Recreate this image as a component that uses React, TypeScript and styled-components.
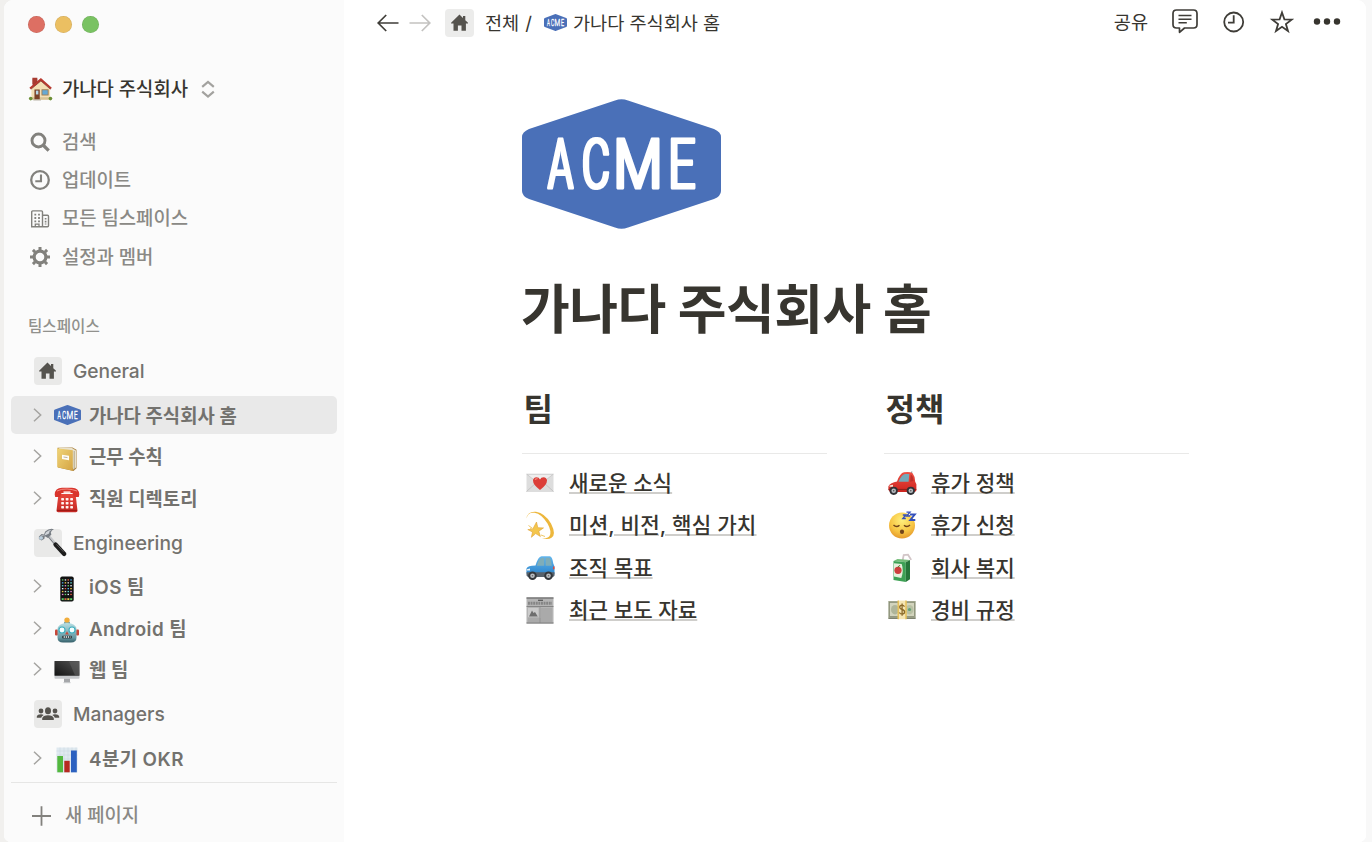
import React from "react";
import styled, { createGlobalStyle } from "styled-components";

const GlobalStyle = createGlobalStyle`
  *, *::before, *::after { box-sizing: border-box; }
  body {
    margin: 0;
    background: #f4f3f1;
    font-family: Inter, "Noto Sans CJK KR", sans-serif;
    color: #37352f;
    overflow: hidden;
  }
  svg { display: block; flex: none; overflow: visible; }
`;

/* ---------- layout ---------- */

const Desktop = styled.div`
  height: 842px;
  padding: 0 6px 0 4px;
  background: linear-gradient(90deg, #f1f0ee 0, #f1f0ee 50%, #f8f8f8 50%);
`;

const Window = styled.div`
  height: 842px;
  display: flex;
  border-radius: 9px 9px 7px 7px;
  overflow: hidden;
  background: #fff;
`;

const Sidebar = styled.aside`
  width: 340px;
  flex: none;
  display: flex;
  flex-direction: column;
  background: #fbfbfb;
`;

const TrafficLights = styled.div`
  display: flex;
  gap: 10px;
  padding: 16px 0 0 24px;
`;

const Light = styled.span<{ $color: string }>`
  width: 17px;
  height: 17px;
  border-radius: 50%;
  background: ${(p) => p.$color};
  box-shadow: inset 0 0 0 0.5px rgba(0, 0, 0, 0.12);
`;

const Workspace = styled.div`
  display: flex;
  align-items: center;
  height: 36px;
  margin-top: 38px;
  padding-left: 25px;
`;

const WorkspaceName = styled.span`
  margin: 0 13px 0 10px;
  padding-top: 2px;
  font-size: 18.8px;
  font-weight: 500;
  line-height: 28px;
  white-space: nowrap;
`;

const NavList = styled.nav`
  display: flex;
  flex-direction: column;
  margin-top: 16px;
`;

const NavItem = styled.a`
  display: flex;
  align-items: center;
  gap: 11px;
  height: 38.3px;
  padding-left: 25px;
  font-size: 18.8px;
  font-weight: 500;
  line-height: 28px;
  color: #8a8985;
  white-space: nowrap;
`;

const NavLabel = styled.span`
  padding-top: 1px;
`;

const SectionLabel = styled.h2`
  margin: 39px 0 10px 24px;
  font-size: 15.6px;
  font-weight: 500;
  line-height: 24px;
  color: #91918d;
`;

const Group = styled.section`
  margin-bottom: 4px;
`;

const GroupHeader = styled.div`
  display: flex;
  align-items: center;
  gap: 11px;
  height: 44px;
  padding-left: 30px;
  font-size: 19.2px;
  font-weight: 500;
  line-height: 28px;
  color: #73726e;
`;

const IconTile = styled.span`
  display: flex;
  align-items: center;
  justify-content: center;
  width: 28px;
  height: 28px;
  flex: none;
  border-radius: 4px;
  background: #e9e9e8;
`;

const TreeList = styled.div`
  display: flex;
  flex-direction: column;
  gap: 3px;
  padding: 2.6px 7px 0;
`;

const TreeRow = styled.a<{ $active?: boolean }>`
  display: flex;
  align-items: center;
  height: 38.3px;
  padding-left: 22px;
  border-radius: 5px;
  background: ${(p) => (p.$active ? "#e9e9e9" : "transparent")};
  font-size: 18.8px;
  font-weight: 600;
  line-height: 28px;
  color: #73726e;
  white-space: nowrap;
`;

const TreeIcon = styled.span<{ $drop: number }>`
  display: flex;
  justify-content: center;
  width: 28px;
  margin: 0 8px 0 11px;
  padding-top: ${(p) => p.$drop}px;
`;

const TreeLabel = styled.span<{ $tracking?: number }>`
  padding-top: 4px;
  letter-spacing: ${(p) => p.$tracking ?? 0}px;
`;

const NewPage = styled.div`
  display: flex;
  align-items: center;
  gap: 14px;
  height: 60px;
  margin: auto 7px 0;
  padding: 7px 0 0 21px;
  border-top: 1.5px solid #e6e6e5;
  font-size: 18.8px;
  font-weight: 500;
  line-height: 28px;
  color: #8a8985;
`;

const Main = styled.main`
  flex: 1;
  display: flex;
  flex-direction: column;
  background: #fff;
`;

const TopBar = styled.header`
  display: flex;
  align-items: center;
  height: 46px;
  padding: 0 25px 0 33px;
  font-size: 18.6px;
  line-height: 28px;
  white-space: nowrap;
`;

const Crumbs = styled.div`
  display: flex;
  align-items: center;
`;

const HomeTile = styled(IconTile)`
  margin: 0 11px 0 13px;
  width: 29px;
  background: #ececeb;
`;

const Slash = styled.span`
  margin: 0 12px 0 6px;
`;

const Actions = styled.div`
  display: flex;
  align-items: center;
  margin: -3px 0 0 auto;
`;

const Share = styled.span`
  margin-right: 24px;
`;

const Page = styled.article`
  padding: 53px 0 0 178px;
`;

const Title = styled.h1`
  margin: 41px 0 0 -1px;
  font-size: 53px;
  font-weight: 700;
  line-height: 80px;
  letter-spacing: -0.5px;
  white-space: nowrap;
`;

const Columns = styled.div`
  display: grid;
  grid-template-columns: 305px 305px;
  column-gap: 57px;
  margin-top: 36px;
`;

const ColumnTitle = styled.h2`
  margin: 0;
  padding: 0 0 19px 1.5px;
  border-bottom: 1.3px solid #e9e9e8;
  font-size: 32px;
  font-weight: 600;
  line-height: 48px;
`;

const LinkList = styled.div`
  padding: 7.3px 0 0 4px;
`;

const LinkRow = styled.div`
  display: flex;
  align-items: center;
  gap: 15px;
  height: 42.5px;
  font-size: 21.2px;
  font-weight: 500;
  line-height: 32px;
`;

const PageLink = styled.a<{ $tracking?: number }>`
  letter-spacing: ${(p) => p.$tracking ?? 0}px;
  text-decoration: underline;
  text-decoration-color: #cfcecb;
  text-decoration-thickness: 1.6px;
  text-underline-offset: 1.2px;
  white-space: nowrap;
`;

/* ---------- line icons ---------- */

const logoLetters = [
  { char: "A", x: 26.2, stretch: 0.57 },
  { char: "C", x: 60, stretch: 0.62 },
  { char: "M", x: 91.5, stretch: 0.82 },
  { char: "E", x: 146.5, stretch: 0.68 },
];

const HexLogo = ({ width }: { width: number }) => (
  <svg width={width} height={width > 100 ? (width * 130) / 199 : width * 0.74} viewBox="0 0 199 130" preserveAspectRatio="none">
    <defs>
      <filter id="embolden" x="-10%" y="-10%" width="120%" height="120%">
        <feMorphology operator="dilate" radius="1 0" />
      </filter>
    </defs>
    <path
      d="M93 1.6Q99.500 -1 106 1.600L192 30Q199 33 199 38V92Q199 97 192 100L106 128.400Q99.500 131 93 128.400L7 100Q0 97 0 92V38Q0 33 7 30Z"
      fill="#4a70b8"
    />
    <g
      fontFamily="Roboto, sans-serif"
      fontSize="69"
      fontWeight="300"
      fill="#fff"
      stroke="#fff"
      strokeWidth="2.8"
      strokeLinejoin="round"
      filter={width > 100 ? "url(#embolden)" : undefined}
    >
      {logoLetters.map((l) => (
        <text key={l.char} transform={`translate(${l.x} 89) scale(${l.stretch} 1)`}>
          {l.char}
        </text>
      ))}
    </g>
  </svg>
);

const HomeGlyph = () => (
  <svg width="18" height="18" viewBox="0 0 18 18" fill="#55534e">
    <path d="M8.500 .6 12 3.900V2h2.300v4.200L17 8.700v.8H14.900V16.700h-4.400v-5.200H6.900V16.700H2.500V9.500H.1V8.700Z" />
  </svg>
);

const SortArrows = () => (
  <svg width="14" height="18" viewBox="0 0 14 18" fill="none" stroke="#a3a29f" strokeWidth="2.200">
    <path d="M1.200 6.800 7 2l5.800 4.800M1.200 11.700 7 16.500l5.800-4.800" />
  </svg>
);

const SearchIcon = () => (
  <svg width="22" height="22" viewBox="0 0 22 22" fill="none" stroke="#82817d">
    <circle cx="9.500" cy="9.500" r="6.500" strokeWidth="2.900" />
    <path d="m14.300 14.300 5.400 5.300" strokeWidth="3.300" />
  </svg>
);

const UpdatesIcon = () => (
  <svg width="22" height="22" viewBox="0 0 22 22" fill="none" stroke="#82817d">
    <circle cx="11" cy="11" r="8.800" strokeWidth="2.300" />
    <path d="M12 5.600v6.600H6.300" strokeWidth="2.100" />
  </svg>
);

const BuildingIcon = () => (
  <svg width="22" height="22" viewBox="0 0 22 22" fill="none" stroke="#82817d" strokeWidth="1.400">
    <path d="M2.700 18.800V3.900q0-1 1-1h8.800q1 0 1 1v14.900ZM13.500 7.200h5q1 0 1 1v9.600q0 1-1 1h-5" />
    <path d="M6.300 5.800v8.500M10 5.800v8.500" strokeWidth="1.800" strokeDasharray="1.800 1.500" />
    <path d="M16.600 10v6.500" strokeWidth="1.700" strokeDasharray="1.600 1.200" />
    <path d="M6.300 18.500v-2.300h3.700v2.300" strokeWidth="1.300" />
  </svg>
);

const GearIcon = () => (
  <svg width="22" height="22" viewBox="0 0 22 22" fill="none" stroke="#82817d">
    <circle cx="11" cy="11" r="5.900" strokeWidth="3.200" />
    <g strokeWidth="3">
      {[0, 45, 90, 135, 180, 225, 270, 315].map((a) => (
        <path key={a} d="M11 4.200V1" transform={`rotate(${a} 11 11)`} />
      ))}
    </g>
  </svg>
);

const Chevron = () => (
  <svg width="9" height="14" viewBox="0 0 9 14" fill="none" stroke="#a5a4a1" strokeWidth="1.500">
    <path d="m1 .8 6.700 6.200L1 13.200" />
  </svg>
);

const PlusIcon = () => (
  <svg width="19" height="20" viewBox="0 0 19 20" fill="none" stroke="#82817d" strokeWidth="1.800">
    <path d="M9.500 .3v19.400M0 10h19" />
  </svg>
);

const PeopleIcon = () => (
  <svg width="24" height="14" viewBox="0 0 24 14" fill="#55534e">
    <circle cx="5" cy="4" r="2.400" />
    <circle cx="19" cy="4" r="2.400" />
    <ellipse cx="12" cy="3.700" rx="3" ry="3.500" />
    <path d="M6.200 13V11.200Q7 8.200 12 8.200t5.800 3V13ZM.8 10.700V9.500Q1.500 7.300 5 7.300q1.600 0 2.700.6Q5.600 9 5.200 10.700ZM23.200 10.700V9.500Q22.500 7.300 19 7.300q-1.600 0-2.700.6 2.100 1.100 2.500 2.800Z" />
  </svg>
);

const ArrowIcon = ({ forward }: { forward?: boolean }) => (
  <svg width="22" height="18" viewBox="0 0 22 18" fill="none" stroke={forward ? "#c3c2c0" : "#3f3d38"} strokeWidth="1.700">
    <path d={forward ? "M.5 9h20M12.800 1l8 8-8 8" : "M21.500 9h-20M9.200 1l-8 8 8 8"} />
  </svg>
);

const CommentIcon = () => (
  <svg width="26" height="25" viewBox="0 0 26 25" fill="none" stroke="#3f3d38" strokeWidth="1.700" strokeLinejoin="round">
    <path d="M4.500 1h17Q25 1 25 4.500v11q0 3.500-3.500 3.500H12.500L7.500 23.300V19h-3Q1 19 1 15.500v-11Q1 1 4.500 1Z" />
    <path d="M6.500 6.600h13M6.500 10.200h13M6.500 13.800h8.300" strokeWidth="1.500" />
  </svg>
);

const HistoryIcon = () => (
  <svg width="22" height="22" viewBox="0 0 22 22" fill="none" stroke="#3f3d38" strokeWidth="1.800">
    <circle cx="10.700" cy="11" r="9.500" />
    <path d="M10.700 4.300v7.400H5" />
  </svg>
);

const StarIcon = () => (
  <svg width="24" height="24" viewBox="0 0 24 24" fill="none" stroke="#3f3d38" strokeWidth="1.800" strokeLinejoin="miter">
    <path d="m12 2.500 2.400 6.900 7.300.2-5.800 4.400 2.100 7-6-4.200L6 21l2.100-7-5.800-4.400 7.300-.2Z" />
  </svg>
);

const DotsIcon = () => (
  <svg width="28" height="7" viewBox="0 0 28 7" fill="#37352f">
    <circle cx="4" cy="3.500" r="3.200" />
    <circle cx="14" cy="3.500" r="3.200" />
    <circle cx="24" cy="3.500" r="3.200" />
  </svg>
);

/* ---------- emoji illustrations ---------- */

const HouseEmoji = () => (
  <svg width="23" height="24" viewBox="0 0 24 24">
    <path d="M4 1.500h4.500v7H4Z" fill="#8c3a30" />
    <path d="M2.500 11.500 12.400 3 22 11.500V23H2.500Z" fill="#f3dfb5" />
    <path d="M2.500 20.500H22V23.300H2.500Z" fill="#d9c294" />
    <path d="M12.400 .6 23.800 10.600 22.600 12.300 12.400 3.600 1.800 12.300.4 10.600Z" fill="#b8392f" />
    <path d="m12.400 3.600 10 8.700M2 12.300l10.400-8.700" stroke="#7d2a22" strokeWidth=".7" />
    <path d="M3.500 .3h5.200v3L3.500 7.500Z" fill="#a83c32" />
    <rect x="5.700" y="12.500" width="5.500" height="10.500" fill="#7a4228" />
    <rect x="7.200" y="13.700" width="2.600" height="4" fill="#b8d7e6" />
    <rect x="13.500" y="12.800" width="6.500" height="5.500" fill="#66a9d4" stroke="#a47a4a" strokeWidth=".9" />
    <circle cx="1.800" cy="22" r="1.900" fill="#6c8f35" />
    <circle cx="22.400" cy="22" r="1.900" fill="#6c8f35" />
    <rect x="4.500" y="22.800" width="8" height="1.200" fill="#b9b3a8" />
  </svg>
);

const LedgerEmoji = () => (
  <svg width="22" height="26" viewBox="0 0 22 26">
    <defs>
      <linearGradient id="ledger" x1="0" y1="0" x2="1" y2="1">
        <stop offset="0" stopColor="#f0d478" />
        <stop offset="1" stopColor="#d4a443" />
      </linearGradient>
    </defs>
    <path d="m1.500 1.700 15-.2 4 2.300v18.500L17.500 25 2 21.500Z" fill="#a9803a" />
    <path d="m2.500 1.700 13.500.3 4 2.400v17l-2.500 2.200Z" fill="#e9e2cc" />
    <path d="M1.200 2.300 16.800 4.300V24.800L1.200 21.200Z" fill="url(#ledger)" />
    <path d="M18.200 5v18.500" stroke="#a3977a" strokeWidth=".8" />
    <path d="m6 8.700 7 1v4.600L6 13Z" fill="#fffdf5" />
    <path d="m7.500 11 4 .6" stroke="#a9a08d" strokeWidth=".8" />
  </svg>
);

const PhoneEmoji = () => (
  <svg width="26" height="26" viewBox="0 0 26 26">
    <defs>
      <linearGradient id="phone" x1="0" y1="0" x2="0" y2="1">
        <stop offset="0" stopColor="#e8463c" />
        <stop offset="1" stopColor="#c42a25" />
      </linearGradient>
    </defs>
    <path d="M4.500 7h17l2 16.500q.2 1.800-1.700 1.800H4.200q-1.900 0-1.700-1.800Z" fill="url(#phone)" />
    <path d="M.7 7.500Q1 1 8 .8h10q7 .2 7.300 6.700l-.5 2.600h-5l-1.300-4h-11l-1.300 4h-5Z" fill="#d9352d" />
    <path d="M3 4Q7.500 1.700 13 2t10 2" stroke="#f58a80" strokeWidth="1" fill="none" />
    <path d="M9.500 4.300h7v1.800h-7Z" fill="#f7d7d3" />
    {[11, 15, 19].map((y) =>
      [7.2, 11.700, 16.200].map((x) => (
        <rect key={`${x}-${y}`} x={x} y={y} width="2.800" height="2.400" rx=".6" fill="#fff3f0" />
      ))
    )}
    <path d="M3 23.400h20" stroke="#93140f" strokeWidth=".8" />
  </svg>
);

const HammerSvg = styled.svg`
  position: relative;
  left: 4.5px;
`;

const HammerEmoji = () => (
  <HammerSvg width="30" height="29" viewBox="0 0 30 29">
    <path d="m10.500 8 8.500 10" stroke="#c5c7ca" strokeWidth="3" />
    <path d="m10.500 9 8 9.500" stroke="#777a7e" strokeWidth="1" />
    <path d="m17.500 16.500 8.700 9.500" stroke="#1d1d1d" strokeWidth="4.300" strokeLinecap="round" />
    <path d="m18.500 16.300 7 7.500" stroke="#666" strokeWidth=".8" />
    <path d="M.9 8.500 3.600 6 6 6.500 7.200 3.400Q11.500-.2 16 1.200q-2.700.8-3.200 3.200l.6 2.200L10 10 6.800 8.300 6.400 10.800 3.500 12.500.9 11Z" fill="#777d84" />
    <path d="M1.800 9 4 7.200l2 .8 2-3.800Q11 1.600 13.500 1.700 10.700 3.500 11 5.500L8.500 6.700" fill="#d0d4d9" />
    <ellipse cx="3" cy="10" rx="2" ry="1.800" fill="#bcd0df" />
  </HammerSvg>
);

const appColors = ["#5fd068", "#e8f3ff", "#e25f43", "#51a8e8", "#efc84a", "#d7d7d7", "#5fd3d0", "#e68ad6"];
const MobileEmoji = () => (
  <svg width="14" height="26" viewBox="0 0 14 26">
    <rect x=".3" y=".5" width="13.400" height="25" rx="1.800" fill="#111" />
    {[0, 1, 2, 3, 4, 5].map((r) =>
      [0, 1, 2, 3].map((c) => (
        <rect key={`${r}-${c}`} x={1.9 + c * 2.8} y={3.3 + r * 2.9} width="1.500" height="1.300" fill={appColors[(r * 3 + c) % 8]} />
      ))
    )}
    <rect x="1.300" y="22" width="11.400" height="2.400" fill="#23402a" />
    {[0, 1, 2, 3].map((c) => (
      <rect key={c} x={1.8 + c * 2.8} y="22.300" width="1.800" height="1.700" fill={appColors[(c * 2) % 6]} />
    ))}
  </svg>
);

const RobotEmoji = () => (
  <svg width="24" height="26" viewBox="0 0 24 26">
    <defs>
      <linearGradient id="robot" x1="0" y1="0" x2="0" y2="1">
        <stop offset="0" stopColor="#b6dfe4" />
        <stop offset=".75" stopColor="#6699a3" />
        <stop offset="1" stopColor="#365f69" />
      </linearGradient>
    </defs>
    <rect x="0" y="12.500" width="3" height="6" rx="1" fill="#c74738" />
    <rect x="21" y="12.500" width="3" height="6" rx="1" fill="#c74738" />
    <path d="M9 4.800h6V7H9Z" fill="#7ba8b0" />
    <ellipse cx="12" cy="3" rx="2.700" ry="2.600" fill="#f1ad3c" />
    <path d="M12 6q9 0 9.500 6.500v8Q21.500 25.500 16 25.500H8q-5.500 0-5.500-5v-8Q3 6 12 6Z" fill="url(#robot)" />
    <circle cx="7" cy="13" r="3" fill="#f4ffff" stroke="#3dafc0" strokeWidth="1.100" />
    <circle cx="17" cy="13" r="3" fill="#f4ffff" stroke="#3dafc0" strokeWidth="1.100" />
    <path d="m12 14.200 1.800 3.200h-3.600Z" fill="#c64a3a" />
    <rect x="7" y="18.800" width="10" height="2.600" rx="1" fill="#354346" />
    <path d="M8.700 20h6.700" stroke="#eee" strokeWidth="1.500" strokeDasharray="1.200 .9" />
  </svg>
);

const DesktopEmoji = () => (
  <svg width="26" height="24" viewBox="0 0 26 24">
    <defs>
      <linearGradient id="screen" x1="0" y1="1" x2="1" y2="0">
        <stop offset="0" stopColor="#131313" />
        <stop offset="1" stopColor="#545454" />
      </linearGradient>
    </defs>
    <rect x=".5" y="1" width="25" height="17.700" rx=".8" fill="#c7c9cc" />
    <rect x=".5" y="1" width="25" height="14.800" rx=".6" fill="url(#screen)" />
    <path d="M15 1.500h10v14h-4Z" fill="#646464" opacity=".5" />
    <path d="M10 18.700h6v3.700h-6Z" fill="#a5a7aa" />
    <path d="M9.500 22h7v1.200h-7Z" fill="#c8cacc" />
  </svg>
);

const ChartEmoji = () => (
  <svg width="22" height="26" viewBox="0 0 22 26">
    <rect x=".5" y=".5" width="21" height="25" fill="#dfe9f0" />
    <path d="M.5 4h21M.5 8h21M.5 12h21M4 .5v25M8 .5v25M12 .5v25M16 .5v25M20 .5v25" stroke="#c7d5df" strokeWidth=".5" />
    <rect x="1.300" y="9" width="5.700" height="16.300" fill="#53b83f" />
    <rect x="8.300" y="13.800" width="5.400" height="11.500" fill="#b62a20" />
    <rect x="15" y="3.500" width="5.800" height="21.800" fill="#2c61c0" />
  </svg>
);

const LoveLetterEmoji = () => (
  <svg width="28" height="28" viewBox="0 0 28 28">
    <rect x=".5" y="5" width="27" height="18" rx=".6" fill="#dddddd" />
    <path d="m.5 22.500 10-9M27.500 22.500l-10-9" stroke="#bcbcbc" strokeWidth=".8" />
    <path d="M.7 5.200 14 15.500 27.300 5.200Z" fill="#eeeeee" stroke="#c2c2c2" strokeWidth=".7" />
    <path d="M14 21Q7 16 7 11.600 7.200 8.300 10.500 8.200 13 8.200 14 10.500 15 8.200 17.500 8.200 20.800 8.300 21 11.600 21 16 14 21Z" fill="#dc3e38" />
    <path d="M9 10.700q1-1.300 2.600-.9" stroke="#f58e83" strokeWidth="1.100" fill="none" />
  </svg>
);

const DizzyEmoji = () => (
  <svg width="28" height="30" viewBox="0 0 28 30">
    <path d="M.5 8.500Q1.500 1 10 1.800 19 3.300 25 13.500 30.500 24.500 25.500 27.700 22.500 29.700 16 28.300q6 .2 7.600-2.300Q26 21.500 21.500 13.500 15.500 4 8.500 2.800 1.800 2 .5 8.500Z" fill="#edb73c" />
    <path d="m10.500 12 1.300 5.700 5.700.2-4.700 3.300 1.600 5.300-4.700-2.900-4.300 3.700L6.500 22 1.800 19.600l4.900-.4Z" fill="#f4c64c" stroke="#dfa134" strokeWidth=".6" strokeLinejoin="round" />
    <path d="m4 18 2.500 1.500M2.500 15.500l4.200 3M15 25l4 1.500" stroke="#f0c866" strokeWidth="1" />
  </svg>
);

const SuvEmoji = () => (
  <svg width="29" height="26" viewBox="0 0 29 26">
    <defs>
      <linearGradient id="suv" x1="0" y1="0" x2="0" y2="1">
        <stop offset="0" stopColor="#63b7ee" />
        <stop offset="1" stopColor="#277fc8" />
      </linearGradient>
    </defs>
    <path d="M9.500 10.500Q12 1.800 15.500 1.200h8.200q2.700.3 3.600 7.300l1.200 3v7.500L27 21.500H2L.5 18v-4.500q1-2.800 9-3Z" fill="url(#suv)" />
    <path d="M10.800 10.700Q13 3.500 16 2.800h2.200v7.900ZM19.600 2.800h3.700q1.800.8 2.500 7.900h-6.200Z" fill="#7fadb9" />
    <path d="M.5 17.300h28v3.500L27 22H2L.5 20.500Z" fill="#56616b" />
    <path d="M1 14.300l3-.8v2H1Z" fill="#eef6fa" />
    <rect x="27" y="11.500" width="1.500" height="2.800" fill="#e14839" />
    {[6.500, 22.500].map((x) => (
      <g key={x}>
        <circle cx={x} cy="20.800" r="4.300" fill="#33373b" />
        <circle cx={x} cy="20.800" r="2.300" fill="#b8bdc2" />
        <circle cx={x} cy="20.800" r=".8" fill="#666" />
      </g>
    ))}
  </svg>
);

const NewspaperEmoji = () => (
  <svg width="28" height="27" viewBox="0 0 28 27">
    <rect x=".5" y=".5" width="27" height="26" fill="#b4b4b4" />
    <path d="M.5 1h27" stroke="#6f6f6f" strokeWidth="1.300" />
    <path d="M2 6.300h24" stroke="#858585" strokeWidth="3" strokeDasharray="1.900 .7" />
    <path d="M12 3.300h5" stroke="#555" strokeWidth="1.200" />
    <path d="M.5 9.500h27" stroke="#797979" strokeWidth=".8" />
    <rect x="2" y="11" width="10.500" height="9" fill="#cbcbcb" />
    <path d="m3 19.500 3-6 1.500 2.500 1.500-1 2.800 4.500Z" fill="#6e6e6e" />
    <path d="M15 12h11M15 14h11M15 16h11M15 18h11M15 20h11M2 22h24M2 24h24" stroke="#999" strokeWidth=".7" />
    <path d="M14 10v16" stroke="#8a8a8a" strokeWidth=".7" />
    <path d="M.5 26h27" stroke="#777" strokeWidth="1" />
  </svg>
);

const CarEmoji = () => (
  <svg width="29" height="26" viewBox="0 0 29 26">
    <defs>
      <linearGradient id="car" x1="0" y1="0" x2="0" y2="1">
        <stop offset="0" stopColor="#ef5044" />
        <stop offset="1" stopColor="#cd241f" />
      </linearGradient>
    </defs>
    <path d="m23.500 4 .3-2.500" stroke="#555" strokeWidth=".7" />
    <path d="M9 11.500Q12 3 16 2.300q6-.8 8.600.9 2.500 3 2.600 8.500l1.200 2.500v6.300L27 22H2L.4 19.800v-3.600Q2.500 12.500 9 11.500Z" fill="url(#car)" />
    <path d="M10.500 11.700Q13.500 4.700 17 4h4.300l-.7 7.700Z" fill="#74a9b9" />
    <path d="M22.700 4.500q2.500 1.400 2.800 6.500l-3.300.7Z" fill="#be302a" />
    <path d="M.6 19.500h27.700" stroke="#94201b" strokeWidth="1.200" />
    <path d="m1.500 15.500 3.500-.8v2H1.500Z" fill="#fbe5d9" />
    {[5.700, 22.800].map((x) => (
      <g key={x}>
        <circle cx={x} cy="20.800" r="4.100" fill="#303236" />
        <circle cx={x} cy="20.800" r="2.300" fill="#b8bdc2" />
        <circle cx={x} cy="20.800" r=".8" fill="#555" />
      </g>
    ))}
  </svg>
);

const SleepEmoji = () => (
  <svg width="28" height="28" viewBox="0 0 28 28">
    <defs>
      <radialGradient id="sleep" cx=".5" cy=".3" r=".7">
        <stop offset="0" stopColor="#fff07d" />
        <stop offset=".65" stopColor="#f7c543" />
        <stop offset="1" stopColor="#e59a2d" />
      </radialGradient>
    </defs>
    <circle cx="14" cy="14.500" r="13" fill="url(#sleep)" />
    <path d="M5.500 14q3 3 6 .2M16 14.200q3 2.800 6-.2" stroke="#71431a" strokeWidth="1.400" fill="none" />
    <ellipse cx="14" cy="20.700" rx="2.100" ry="2.200" fill="#71431a" />
    <g fill="none" stroke="#3450ba">
      <path d="M14.800 4h3l-3 3.500h3" strokeWidth="1.300" />
      <path d="M18.500 1.200H22L18.500 5H22" strokeWidth="1.300" />
      <path d="M22 3.500h4.800L22.300 9h5" strokeWidth="1.900" />
    </g>
  </svg>
);

const JuiceEmoji = () => (
  <svg width="28" height="30" viewBox="0 0 28 30">
    <path d="m14.500 8 1.200-6 4.300-.3 3.200 5.200" stroke="#d2c5c7" strokeWidth="1.800" fill="none" />
    <path d="m5.500 8 4-1.900 12.500.8-4 2.300Z" fill="#74bd79" />
    <path d="m5.500 8 12.300 1.200V29L5.500 27Z" fill="#3da154" />
    <path d="M17.800 9.200 22 6.900v19.300L17.800 29Z" fill="#26763a" />
    <path d="m6 10.300 7.700.8q2.300 7-.4 13.800L6 23.500Z" fill="#e6f0dc" />
    <circle cx="10" cy="17.300" r="3.600" fill="#ce3e3d" />
    <path d="M9.800 14.300q1-1.900 2.300-1.700" stroke="#527c2e" strokeWidth="1" fill="none" />
  </svg>
);

const CashEmoji = () => (
  <svg width="28" height="20" viewBox="0 0 28 20">
    <rect x=".3" y="1" width="27.400" height="17.700" fill="#a2a78f" />
    <rect x="1.600" y="2.500" width="24.800" height="14" fill="#d2d4bd" stroke="#858b72" strokeWidth=".7" />
    <ellipse cx="7" cy="9.700" rx="4" ry="4.800" fill="#afb599" />
    <ellipse cx="21.500" cy="9.700" rx="4" ry="4.800" fill="#b8c1a4" />
    <circle cx="21.500" cy="9.500" r="1.600" fill="#63a176" />
    <path d="M.5 18.300h27" stroke="#6e725f" strokeWidth="1" />
    <rect x="9.800" y=".6" width="8.600" height="18.600" fill="#f5e6b4" />
    <path d="M10.200 .6v18.600M18 .6v18.600" stroke="#e3b844" strokeWidth="1.200" />
    <path d="M16.500 6.700Q15.500 5.200 14 5.200q-2.300.1-2.300 2.100 0 1.600 2.400 2.200 2.500.6 2.500 2.500-.1 2-2.500 2.200-1.700 0-2.800-1.700M14.100 3.600v12.200" fill="none" stroke="#8b6a2a" strokeWidth="1.300" />
  </svg>
);

/* ---------- data ---------- */

interface Item {
  label: string;
  icon: React.ReactNode;
  active?: boolean;
  drop?: number;
  tracking?: number;
}

const navItems: Item[] = [
  { label: "검색", icon: <SearchIcon /> },
  { label: "업데이트", icon: <UpdatesIcon /> },
  { label: "모든 팀스페이스", icon: <BuildingIcon /> },
  { label: "설정과 멤버", icon: <GearIcon /> },
];

const groups: { name: string; icon: React.ReactNode; pages: Item[] }[] = [
  {
    name: "General",
    icon: <HomeGlyph />,
    pages: [
      { label: "가나다 주식회사 홈", icon: <HexLogo width={27} />, active: true, drop: 0 },
      { label: "근무 수칙", icon: <LedgerEmoji /> },
      { label: "직원 디렉토리", icon: <PhoneEmoji /> },
    ],
  },
  {
    name: "Engineering",
    icon: <HammerEmoji />,
    pages: [
      { label: "iOS 팀", icon: <MobileEmoji />, tracking: 0.4 },
      { label: "Android 팀", icon: <RobotEmoji />, tracking: 0.45 },
      { label: "웹 팀", icon: <DesktopEmoji /> },
    ],
  },
  {
    name: "Managers",
    icon: <PeopleIcon />,
    pages: [{ label: "4분기 OKR", icon: <ChartEmoji />, tracking: 0.45 }],
  },
];

const columns: { title: string; links: Item[] }[] = [
  {
    title: "팀",
    links: [
      { label: "새로운 소식", icon: <LoveLetterEmoji /> },
      { label: "미션, 비전, 핵심 가치", icon: <DizzyEmoji />, tracking: 0.17 },
      { label: "조직 목표", icon: <SuvEmoji /> },
      { label: "최근 보도 자료", icon: <NewspaperEmoji /> },
    ],
  },
  {
    title: "정책",
    links: [
      { label: "휴가 정책", icon: <CarEmoji /> },
      { label: "휴가 신청", icon: <SleepEmoji /> },
      { label: "회사 복지", icon: <JuiceEmoji /> },
      { label: "경비 규정", icon: <CashEmoji /> },
    ],
  },
];

const LinkIcon = styled.span`
  display: flex;
  justify-content: center;
  width: 28px;
  flex: none;
`;

const Gap = styled.span<{ $w: number }>`
  width: ${(p) => p.$w}px;
`;

export default function App() {
  return (
    <Desktop>
      <GlobalStyle />
      <Window>
        <Sidebar>
          <TrafficLights>
            <Light $color="#dd6f63" />
            <Light $color="#ebbf62" />
            <Light $color="#79c262" />
          </TrafficLights>
          <Workspace>
            <HouseEmoji />
            <WorkspaceName>가나다 주식회사</WorkspaceName>
            <SortArrows />
          </Workspace>
          <NavList>
            {navItems.map((n) => (
              <NavItem key={n.label}>
                {n.icon}
                <NavLabel>{n.label}</NavLabel>
              </NavItem>
            ))}
          </NavList>
          <SectionLabel>팀스페이스</SectionLabel>
          {groups.map((g) => (
            <Group key={g.name}>
              <GroupHeader>
                <IconTile>{g.icon}</IconTile>
                <span>{g.name}</span>
              </GroupHeader>
              <TreeList>
                {g.pages.map((p) => (
                  <TreeRow key={p.label} $active={p.active}>
                    <Chevron />
                    <TreeIcon $drop={p.drop ?? 5}>{p.icon}</TreeIcon>
                    <TreeLabel $tracking={p.tracking}>{p.label}</TreeLabel>
                  </TreeRow>
                ))}
              </TreeList>
            </Group>
          ))}
          <NewPage>
            <PlusIcon />
            <span>새 페이지</span>
          </NewPage>
        </Sidebar>
        <Main>
          <TopBar>
            <ArrowIcon />
            <Gap $w={10} />
            <ArrowIcon forward />
            <Gap $w={1} />
            <HomeTile>
              <HomeGlyph />
            </HomeTile>
            <Crumbs>
              <span>전체</span>
              <Slash>/</Slash>
              <HexLogo width={23} />
              <Gap $w={6} />
              <span>가나다 주식회사 홈</span>
            </Crumbs>
            <Actions>
              <Share>공유</Share>
              <CommentIcon />
              <Gap $w={25} />
              <HistoryIcon />
              <Gap $w={25} />
              <StarIcon />
              <Gap $w={19} />
              <DotsIcon />
            </Actions>
          </TopBar>
          <Page>
            <HexLogo width={199} />
            <Title>가나다 주식회사 홈</Title>
            <Columns>
              {columns.map((c) => (
                <section key={c.title}>
                  <ColumnTitle>{c.title}</ColumnTitle>
                  <LinkList>
                    {c.links.map((l) => (
                      <LinkRow key={l.label}>
                        <LinkIcon>{l.icon}</LinkIcon>
                        <PageLink $tracking={l.tracking}>{l.label}</PageLink>
                      </LinkRow>
                    ))}
                  </LinkList>
                </section>
              ))}
            </Columns>
          </Page>
        </Main>
      </Window>
    </Desktop>
  );
}
